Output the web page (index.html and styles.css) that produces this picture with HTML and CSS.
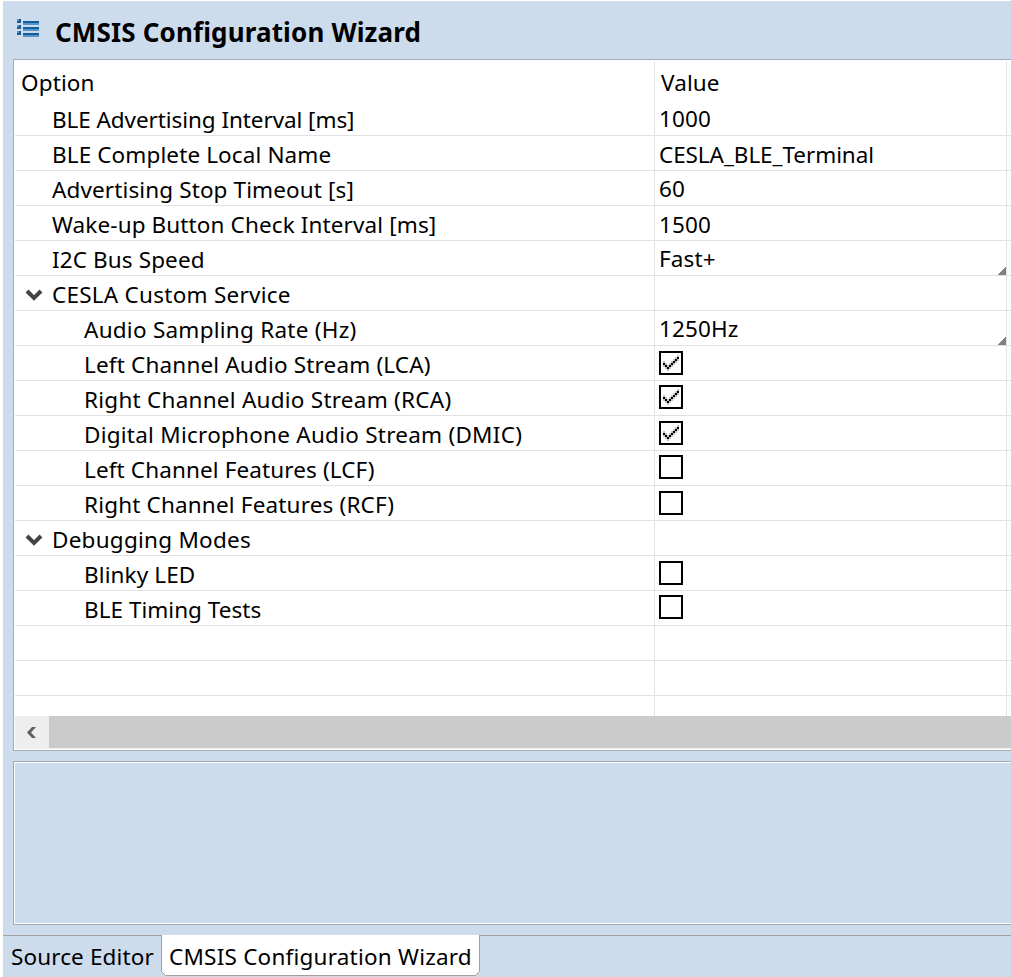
FILE: index.html
```html
<!DOCTYPE html>
<html lang="en">
<head>
<meta charset="utf-8">
<title>CMSIS Configuration Wizard</title>
<link rel="stylesheet" href="styles.css">
</head>
<body>
<svg width="0" height="0" class="defs">
  <symbol id="check" viewBox="-1 0 20 20"><path fill="#c0c0c0" d="M1 8h2v2h-2zM3 10h2v2h-2zM1 12h2v2h-2zM3 14h2v2h-2zM5 16h2v2h-2zM5 12h2v2h-2zM7 14h2v2h-2zM9 12h2v2h-2zM11 10h2v2h-2zM13 8h2v2h-2zM15 6h2v2h-2zM13 4h2v2h-2zM11 6h2v2h-2zM9 8h2v2h-2zM7 10h2v2h-2zM15 2h2v2h-2z"/><path fill="#000" d="M1 10h2v2h-2zM3 12h2v2h-2zM5 14h2v2h-2zM7 12h2v2h-2zM9 10h2v2h-2zM11 8h2v2h-2zM13 6h2v2h-2zM15 4h2v2h-2z"/></symbol>
  <symbol id="chev" viewBox="0 0 18 12"><path fill="none" stroke="#444" stroke-width="4" d="M2 2l7 7 7-7"/></symbol>
</svg>
<main class="editor">
  <header class="title">
    <svg class="logo" width="22" height="18" viewBox="0 0 22 18" shape-rendering="crispEdges"><path fill="#0f5f9f" d="M0 0h4v4H0zM0 6h4v4H0zM0 12h4v4H0zM6 2h16v2H6zM6 8h16v2H6zM6 14h16v2H6z"/><path fill="#5b93c4" d="M0 0h2v2H0zM0 6h2v2H0zM0 12h2v2H0zM6 4h16v2H6zM6 10h16v2H6zM6 16h16v2H6z"/></svg>
    <h1>CMSIS Configuration Wizard</h1>
  </header>
  <section class="table">
    <div class="row head"><span class="opt">Option</span><span class="val">Value</span></div>
    <div class="row"><span class="opt l1 snug">BLE Advertising Interval [ms]</span><span class="val">1000</span></div>
    <div class="row"><span class="opt l1">BLE Complete Local Name</span><span class="val low snug">CESLA_BLE_Terminal</span></div>
    <div class="row"><span class="opt l1">Advertising Stop Timeout [s]</span><span class="val">60</span></div>
    <div class="row"><span class="opt l1">Wake-up Button Check Interval [ms]</span><span class="val low">1500</span></div>
    <div class="row"><span class="opt l1">I2C Bus Speed</span><span class="val combo">Fast+</span></div>
    <div class="row"><span class="opt group wide"><svg class="chev"><use href="#chev"/></svg>CESLA Custom Service</span><span class="val"></span></div>
    <div class="row"><span class="opt l2 wide">Audio Sampling Rate (Hz)</span><span class="val combo">1250Hz</span></div>
    <div class="row"><span class="opt l2 mid">Left Channel Audio Stream (LCA)</span><span class="val"><i class="box"><svg><use href="#check"/></svg></i></span></div>
    <div class="row"><span class="opt l2 wide">Right Channel Audio Stream (RCA)</span><span class="val"><i class="box up"><svg><use href="#check"/></svg></i></span></div>
    <div class="row"><span class="opt l2 wide">Digital Microphone Audio Stream (DMIC)</span><span class="val"><i class="box"><svg><use href="#check"/></svg></i></span></div>
    <div class="row"><span class="opt l2">Left Channel Features (LCF)</span><span class="val"><i class="box up"></i></span></div>
    <div class="row"><span class="opt l2 mid">Right Channel Features (RCF)</span><span class="val"><i class="box"></i></span></div>
    <div class="row"><span class="opt group wide"><svg class="chev"><use href="#chev"/></svg>Debugging Modes</span><span class="val"></span></div>
    <div class="row"><span class="opt l2">Blinky LED</span><span class="val"><i class="box"></i></span></div>
    <div class="row"><span class="opt l2 plain">BLE Timing Tests</span><span class="val"><i class="box up"></i></span></div>
    <div class="row"><span class="opt"></span><span class="val"></span></div>
    <div class="row"><span class="opt"></span><span class="val"></span></div>
    <div class="row last"><span class="opt"></span><span class="val"></span></div>
    <div class="scroll"><span class="left"><svg width="9" height="11" viewBox="0 0 9 11"><path fill="#606060" d="M5 0h4L4 5.500l5 5.500H5L0 5.500z"/></svg></span><span class="thumb"></span></div>
  </section>
  <section class="desc"></section>
  <nav class="tabs"><span class="tab">Source Editor</span><span class="tab active"><svg class="frame" width="319" height="41" viewBox="0 0 319 41"><path fill="#fff" stroke="#a0a0a0" d="M.5 0V36.500L4.500 40.500H314.500L318.500 36.500V0"/></svg><b>CMSIS Configuration Wizard</b></span></nav>
</main>
</body>
</html>
```

FILE: styles.css
```css
* { box-sizing: border-box; }
body { margin: 0; background: #fff; padding: 1px 0 0 3px; overflow: hidden; font: 22.5px/34px "Noto Sans", "Open Sans", sans-serif; letter-spacing: 0.12px; color: #000; }
.defs { display: block; position: absolute; }
.editor { height: 976px; background: #cddcec; display: flex; flex-direction: column; }
.title { height: 58px; display: flex; padding-left: 14px; flex: none; }
.logo { margin-top: 18px; }
h1 { margin: 14px 0 0 16px; font-size: 26px; line-height: 34px; font-weight: 700; letter-spacing: 0.15px; white-space: nowrap; }
.table { height: 692px; margin-left: 10px; flex: none; background: #fff; border: 1px solid #a5acb5; border-right: 0; padding: 1px 0 1px 1px; }
.row { height: 35px; display: grid; grid-template-columns: 640px 352px 1fr; border-bottom: 1px solid #e2e2e2; }
.row::after { content: ""; }
.opt, .val { border-right: 1px solid #e2e2e2; white-space: nowrap; display: flex; height: 34px; padding-top: 2px; }
.val { padding: 1px 0 0 4px; }
.val.low { padding-top: 2px; }
.opt { padding-left: 6px; }
.head { height: 40px; border-bottom: 0; }
.head span { height: 40px; padding-top: 5px; }
.head .val { padding-left: 6px; }
.opt.l1 { padding-left: 37px; }
.opt.l2 { padding-left: 69px; }
.opt.group { padding-left: 10px; }
.snug { letter-spacing: -0.07px; }
.plain { letter-spacing: 0.03px; }
.mid { letter-spacing: 0.17px; }
.wide { letter-spacing: 0.25px; }
.chev { width: 18px; height: 12px; margin: 11px 9px 0 0; }
.combo { background: linear-gradient(135deg, transparent 50%, #808080 50%) right bottom / 8px 8px no-repeat; }
.box { width: 24px; height: 24px; border: 2px solid #000; margin-top: 4px; display: block; }
.box.up { margin-top: 3px; }
.box svg { width: 20px; height: 20px; display: block; shape-rendering: crispEdges; }
.last { height: 20px; border: 0; }
.last span { height: 20px; }
.scroll { height: 33px; background: #eee; display: flex; }
.left { width: 34px; height: 33px; padding: 11px 0 0 12px; line-height: 0; }
.thumb { flex: 1; height: 32px; background: #cbcbcb; }
.desc { height: 164px; flex: none; margin: 10px 0 10px 10px; border: 1px solid #a5a9ad; border-right: 0; box-shadow: inset 1px 1px #fff, inset 0 -1px #fff; }
.tabs { height: 42px; border-top: 1px solid #a0a0a0; display: flex; line-height: 42px; white-space: nowrap; }
.tab { width: 158px; padding-left: 8px; }
.tab.active { width: 319px; margin-top: -1px; position: relative; padding-left: 8px; line-height: 44px; letter-spacing: 0.22px; }
.frame { position: absolute; left: 0; top: 0; }
.tab b { position: relative; font-weight: 400; }
```
